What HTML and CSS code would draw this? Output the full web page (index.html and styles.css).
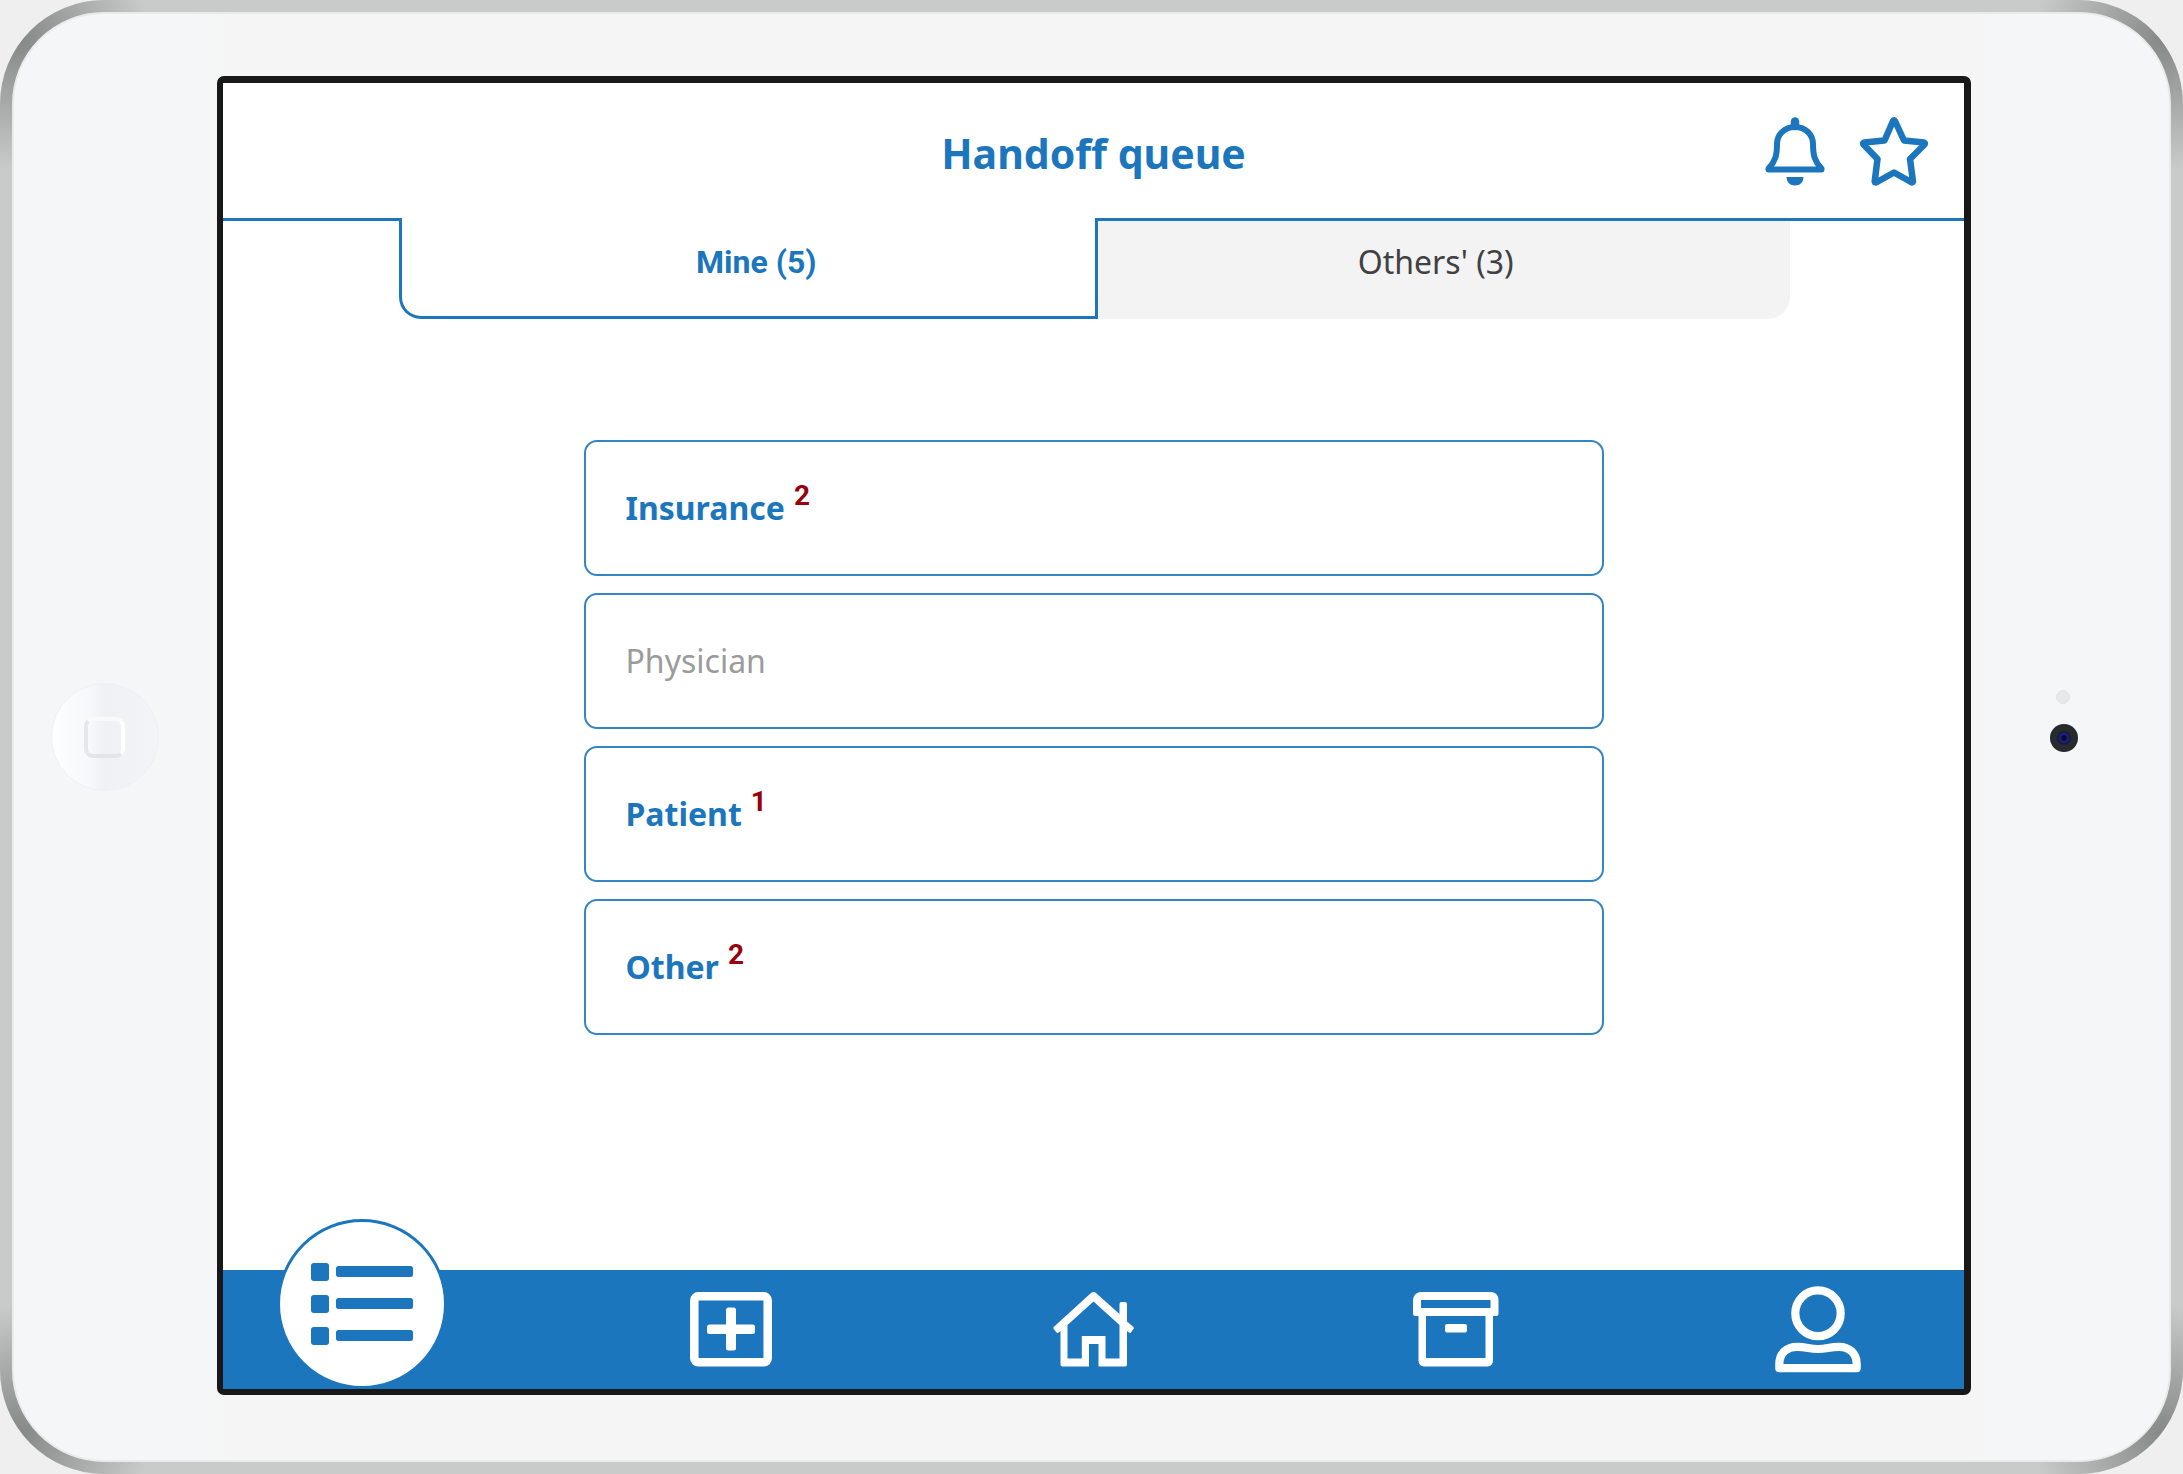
FILE: index.html
```html
<!DOCTYPE html>
<html lang="en">
<head>
<meta charset="utf-8">
<meta name="viewport" content="width=device-width, initial-scale=1">
<title>Handoff queue</title>
<link rel="stylesheet" href="styles.css">
</head>
<body>
<div class="tablet">
  <div class="bezel">
    <div class="side side-left"><span class="home-button"><span class="home-glyph"></span></span></div>
    <div class="screen">
      <header class="header">
        <h1 class="title">Handoff queue</h1>
        <div class="actions">
          <button class="icon-button" type="button" aria-label="Notifications">
            <svg width="60" height="69" viewBox="0 0 60 69" fill="none" stroke="#1c76bd" stroke-linejoin="round" stroke-linecap="round">
              <path stroke-width="8.500" d="M30 4.500V9"/>
              <path stroke-width="6" d="M30 10C19 10 12 18 12 27C12 38 10.500 44 3.500 51.500V52.500H56.500V51.500C49.500 44 48 38 48 27C48 18 41 10 30 10Z"/>
              <path fill="#1c76bd" stroke="none" d="M21.500 60H38.500C38.500 65 35 68.500 30 68.500S21.500 65 21.500 60Z"/>
            </svg>
          </button>
          <button class="icon-button" type="button" aria-label="Favorites">
            <svg width="68" height="69" viewBox="0 0 68 69" fill="none" stroke="#1c76bd" stroke-width="6.500" stroke-linejoin="round">
              <path d="M33 4Q34 2.500 35 4L44 23.500L64 25.500Q65.500 26 64.500 27.500L50 42L53 64.500Q52.500 66 51 65L34 55.500L17 65Q15 66 14.700 64.500L17.500 42L3.500 27.500Q2.500 26 4 25.500L24.500 23.500Z"/>
            </svg>
          </button>
        </div>
      </header>
      <nav class="tabs" aria-label="Queue owner">
        <button class="tab tab-active" type="button" aria-pressed="true">Mine (5)</button>
        <button class="tab" type="button" aria-pressed="false">Others' (3)</button>
      </nav>
      <main class="queue">
        <button class="card" type="button">Insurance<span class="count">2</span></button>
        <button class="card card-empty" type="button">Physician</button>
        <button class="card" type="button">Patient<span class="count">1</span></button>
        <button class="card" type="button">Other<span class="count">2</span></button>
      </main>
      <nav class="navbar" aria-label="Main">
        <a class="nav-current" href="#queue" aria-label="Queue" aria-current="page">
          <svg width="102" height="82" viewBox="0 0 102 82" fill="#1c76bd">
            <rect width="18" height="18" rx="3"/><rect x="25" y="3" width="77" height="11" rx="2.500"/>
            <rect y="32" width="18" height="18" rx="3"/><rect x="25" y="35" width="77" height="11" rx="2.500"/>
            <rect y="64" width="18" height="18" rx="3"/><rect x="25" y="67" width="77" height="11" rx="2.500"/>
          </svg>
        </a>
        <a class="nav-link" href="#new" aria-label="New">
          <svg width="82" height="75" viewBox="0 0 82 75">
            <rect x="4.300" y="4.300" width="73.400" height="66" rx="4" fill="none" stroke="#fff" stroke-width="8.500"/>
            <rect x="17" y="32.500" width="48" height="9.500" rx="2.500" fill="#fff"/>
            <rect x="36" y="15.500" width="10" height="43" rx="2.500" fill="#fff"/>
          </svg>
        </a>
        <a class="nav-link" href="#home" aria-label="Home">
          <svg width="81" height="75" viewBox="0 0 81 75" fill="#fff">
            <path d="M38 1Q40.500-1 43 1L66.500 22V12Q66.500 10 68.500 10H72Q74 10 74 12V29.500L80.500 35Q81.300 36 80.500 37L77.500 41Q76.500 41.500 74 39V72.500Q74 74.500 72 74.500H45.500V52H36V74.500H9.500Q7.500 74.500 7.500 72.500V39Q5 41.500 4 41L.700 37Q0 36 .700 35ZM40.500 9.500L14.500 33V66.500H28.800V44H52.500V66.500H66.500V33Z"/>
          </svg>
        </a>
        <a class="nav-link" href="#archive" aria-label="Archive">
          <svg width="86" height="75" viewBox="0 0 86 75" fill="#fff" fill-rule="evenodd">
            <path d="M7 0H79Q85.500 1.500 85.500 8V22Q85.500 24 83 24H80V69Q79.500 74 74.500 74.500H11Q6 74 5.500 69V24H2.500Q0 24 0 22V8Q.500 1.500 7 0ZM8 8V16H77.500V8ZM13 24V66H72.500V24Z"/>
            <rect x="32" y="32" width="22" height="8.500" rx="2"/>
          </svg>
        </a>
        <a class="nav-link" href="#profile" aria-label="Profile">
          <svg width="86" height="87" viewBox="0 0 86 87" fill="none" stroke="#fff" stroke-width="8.200" stroke-linejoin="round">
            <ellipse cx="43" cy="27.300" rx="22.700" ry="22.900"/>
            <path d="M4.300 82.200H81.700V78C81.700 67 74 60.800 64 60.800C54 60.800 52 63 43 63S32 60.800 22 60.800C12 60.800 4.300 67 4.300 78Z"/>
          </svg>
        </a>
      </nav>
    </div>
    <div class="side side-right"><span class="sensor"></span><span class="camera"></span></div>
  </div>
</div>
</body>
</html>
```
FILE: styles.css
```css
* {
  box-sizing: border-box;
}

body {
  margin: 0;
  background: #efefef;
  color: #1c76bd;
  font-family: "Noto Sans", sans-serif;
}

button {
  margin: 0;
  padding: 0;
  border: 0;
  background: none;
  color: inherit;
  font: inherit;
  cursor: pointer;
}

svg {
  display: block;
}

/* Tablet shell: metallic edge with darker corners */
.tablet {
  min-height: 100vh;
  padding: 12px;
  display: flex;
  border-radius: 104px;
  background:
    radial-gradient(circle at 20px 40px, #868887 0, #9b9d9c 40px, #c9cbca 130px) 0 0 / 50% 50% no-repeat,
    radial-gradient(circle at calc(100% - 20px) 40px, #868887 0, #9b9d9c 40px, #c9cbca 130px) 100% 0 / 50% 50% no-repeat,
    radial-gradient(circle at 20px calc(100% - 40px), #868887 0, #9b9d9c 40px, #c9cbca 130px) 0 100% / 50% 50% no-repeat,
    radial-gradient(circle at calc(100% - 20px) calc(100% - 40px), #868887 0, #9b9d9c 40px, #c9cbca 130px) 100% 100% / 50% 50% no-repeat,
    #c9cbca;
}

.bezel {
  flex: 1;
  display: flex;
  padding: 62px 0 65px;
  border: 2px solid #e9ebea;
  border-radius: 92px;
  background: linear-gradient(90deg, #f4f6f8 0, #f4f6f8 160px, #f5f5f5 220px, #f5f5f5 calc(100% - 200px), #f4f6f8 calc(100% - 130px));
}

.side {
  display: flex;
  flex-direction: column;
  align-items: center;
  justify-content: center;
}

.side-left {
  width: 203px;
  padding: 3px 22px 0 0;
}

.side-right {
  width: 198px;
  gap: 20px;
  padding: 0 15px 29px 0;
}

.home-button {
  display: grid;
  place-items: center;
  width: 108px;
  height: 108px;
  border: 1px solid #eff0f2;
  border-radius: 50%;
  background: linear-gradient(90deg, #fdfeff, #f7f8fa 35%, #eff1f5 50%, #f3f4f7);
}

.home-glyph {
  width: 41px;
  height: 41px;
  border: 4px solid;
  border-color: #fafafb #fff #e3e4e6 #e6e7e9;
  border-radius: 9px;
}

.sensor {
  width: 14px;
  height: 14px;
  border: 1px solid #e1e2e3;
  border-radius: 50%;
  background: #e8e8e9;
}

.camera {
  width: 28px;
  height: 28px;
  margin-left: 3px;
  border-radius: 50%;
  background: radial-gradient(circle, #080a30 0 2px, #1c2590 4px, #151a38 6px, #292c2e 8px, #232527);
}

.screen {
  flex: 1;
  min-width: 0;
  display: flex;
  flex-direction: column;
  border: solid #171817;
  border-width: 7px 7px 6px 6px;
  border-radius: 7px;
  background: #fff;
}

.header {
  display: grid;
  grid-template-columns: 1fr auto 1fr;
  align-items: center;
  height: 138px;
  padding-top: 2px;
  border-bottom: 3px solid #1c76bd;
}

.title {
  grid-column: 2;
  margin: 0;
  padding-top: 2px;
  font-size: 41px;
  line-height: 56px;
  font-weight: 700;
}

.actions {
  display: flex;
  justify-content: flex-end;
  gap: 35px;
  padding-right: 36px;
}

.tabs {
  display: flex;
  align-self: center;
  width: 80%;
  height: 101px;
  margin-top: -3px;
  padding-left: 2px;
}

.tab {
  flex: 1;
  padding: 0 16px 16px 0;
  border-top: 3px solid #1c76bd;
  border-radius: 0 0 22px 0;
  background: #f3f3f3;
  color: #414042;
  font-size: 32px;
  line-height: 44px;
  font-kerning: none;
}

.tab-active {
  padding: 0 0 10px 16px;
  border: solid #1c76bd;
  border-width: 0 3px 3px;
  border-radius: 0 0 0 22px;
  background: #fff;
  color: #1c76bd;
  font-family: Roboto, sans-serif;
  font-weight: 700;
  font-kerning: auto;
}

.queue {
  flex: 1;
  display: flex;
  flex-direction: column;
  align-self: center;
  gap: 17px;
  width: 100%;
  max-width: 1020px;
  padding: 121px 0;
}

.card {
  display: flex;
  align-items: center;
  gap: 9px;
  height: 136px;
  padding: 0 40px;
  border: 2px solid #3485c4;
  border-radius: 13px;
  font-size: 32px;
  line-height: 44px;
  font-weight: 700;
  text-align: left;
}

.card-empty {
  color: #9b9b9b;
  font-weight: 400;
}

.count {
  padding-bottom: 24px;
  color: #98000c;
  font-family: Roboto, sans-serif;
  font-size: 28px;
  line-height: 32px;
}

.navbar {
  display: flex;
  align-items: center;
  justify-content: space-between;
  height: 119px;
  padding: 0 103px 0 54px;
  background: #1c76bd;
}

.nav-current {
  display: grid;
  place-items: center;
  align-self: flex-end;
  width: 170px;
  height: 170px;
  margin-right: -36px;
  border: 3px solid #1c76bd;
  border-radius: 50%;
  background: #fff;
}

.nav-link {
  display: grid;
  place-items: center;
  width: 86px;
}
```
